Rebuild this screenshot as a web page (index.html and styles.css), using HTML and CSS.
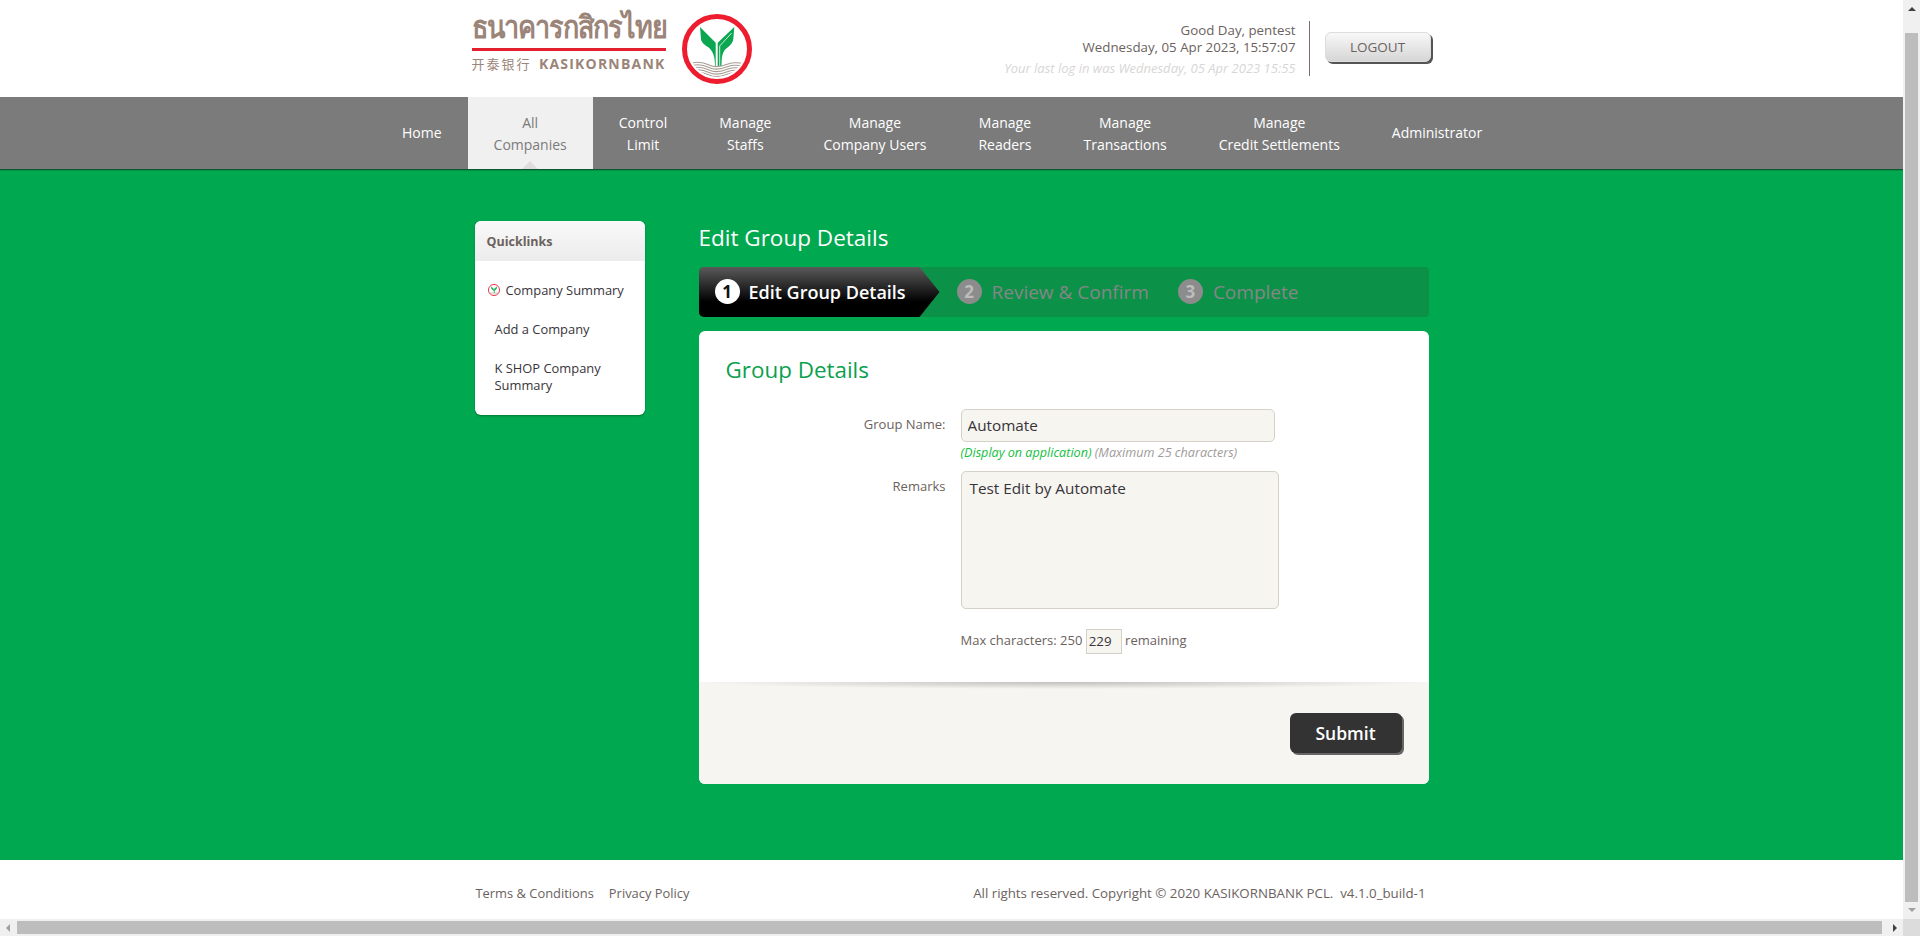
FILE: index.html
```html
<!DOCTYPE html>
<html>
<head>
  <title>Edit Group Details</title>
  <link rel="stylesheet" href="styles.css">
</head>
<body>
  <svg class="defs" width="0" height="0">
    <symbol id="emblem" viewBox="0 0 70 70">
      <clipPath id="ringClip"><circle cx="35" cy="35" r="28"/></clipPath>
      <circle cx="35" cy="35" r="32.500" fill="#fff" stroke="#ed1c2e" stroke-width="5"/>
      <path d="M18 13L33.700 28.700V52H33C33 42 31 37 26 33C21 30 19 27 19 25Z" fill="#0aa650"/>
      <path d="M52.300 13L35.700 28.700V52H39.500C39.500 44 40 37 45 34C49 31 51 28 51.300 25Z" fill="#0aa650"/>
      <path d="M37.700 52V32L49.700 19" fill="none" stroke="#fff" stroke-width="0.800"/>
      <g clip-path="url(#ringClip)" fill="none" stroke="#a89c92" stroke-width="1.100">
        <path d="M7 50C15 47 21 48 27 51S41 52 46 50 55 48 63 50"/>
        <path d="M7 52.500C15 49.500 21 50.500 27 53.500S41 54.500 46 52.500 55 50.500 63 52.500"/>
        <path d="M7 55C15 52 21 53 27 56S41 57 46 55 55 53 63 55"/>
        <path d="M7 57.500C15 54.500 21 55.500 27 58.500S41 59.500 46 57.500 55 55.500 63 57.500"/>
        <path d="M7 60C15 57 21 58 27 61S41 62 46 60 55 58 63 60"/>
      </g>
    </symbol>
  </svg>

  <div class="shell">
    <div class="page">
      <header class="topbar">
        <div class="wrap topbar-inner">
          <div class="logo">
            <div class="logo-thai"><span>ธนาคารกสิกรไทย</span></div>
            <div class="logo-sub"><span class="logo-cn">开泰银行</span><span class="logo-en">KASIKORNBANK</span></div>
          </div>
          <svg class="logo-emblem"><use href="#emblem"/></svg>
          <div class="greeting">
            <div>Good Day, pentest</div>
            <div>Wednesday, 05 Apr 2023, 15:57:07</div>
            <div class="last-login">Your last log in was Wednesday, 05 Apr 2023 15:55</div>
          </div>
          <button type="button" class="logout">LOGOUT</button>
        </div>
      </header>

      <nav class="mainnav">
        <a class="single">Home</a>
        <a class="active">All<br>Companies</a>
        <a>Control<br>Limit</a>
        <a>Manage<br>Staffs</a>
        <a>Manage<br>Company Users</a>
        <a>Manage<br>Readers</a>
        <a>Manage<br>Transactions</a>
        <a>Manage<br>Credit Settlements</a>
        <a class="single">Administrator</a>
      </nav>

      <main class="content">
        <div class="wrap columns">
          <aside class="quicklinks">
            <div class="quicklinks-head">Quicklinks</div>
            <ul>
              <li class="current"><svg class="bullet"><use href="#emblem"/></svg>Company Summary</li>
              <li>Add a Company</li>
              <li>K SHOP Company Summary</li>
            </ul>
          </aside>

          <section class="panel">
            <h1>Edit Group Details</h1>
            <div class="steps">
              <div class="step active"><span class="num">1</span>Edit Group Details</div>
              <div class="step second"><span class="num">2</span>Review &amp; Confirm</div>
              <div class="step third"><span class="num">3</span>Complete</div>
            </div>

            <form class="card">
              <div class="card-body">
                <h2>Group Details</h2>
                <div class="form-grid">
                  <label for="groupName">Group Name:</label>
                  <div>
                    <input id="groupName" class="text-input" type="text" value="Automate">
                    <div class="hint"><em class="green">(Display on application)</em> (Maximum 25 characters)</div>
                  </div>
                  <label for="remarks" class="remarks-label">Remarks</label>
                  <div>
                    <textarea id="remarks" class="text-area">Test Edit by Automate</textarea>
                    <div class="counter">Max characters: 250 <input class="count-box" type="text" value="229"> remaining</div>
                  </div>
                </div>
              </div>
              <div class="card-foot">
                <button type="button" class="submit">Submit</button>
              </div>
            </form>
          </section>
        </div>
      </main>

      <footer class="bottombar">
        <div class="wrap bottombar-inner">
          <a>Terms &amp; Conditions</a>
          <a>Privacy Policy</a>
          <span class="copyright">All rights reserved. Copyright © 2020 KASIKORNBANK PCL.&nbsp; v4.1.0_build-1</span>
        </div>
      </footer>
    </div>

    <div class="vbar">
      <span class="arrow up"></span>
      <div class="vthumb"></div>
      <span class="arrow down"></span>
    </div>
    <div class="hbar">
      <span class="arrow left"></span>
      <div class="hthumb"></div>
      <span class="arrow right"></span>
    </div>
    <div class="corner"></div>
  </div>
</body>
</html>
```
FILE: styles.css
```css
* {
  box-sizing: border-box;
}

body {
  margin: 0;
  overflow: hidden;
  font-family: "Open Sans", "Liberation Sans", sans-serif;
  font-size: 13px;
  color: #666;
  background-color: #fff;
}

.defs {
  display: block;
  height: 0;
}

.shell {
  display: grid;
  grid-template-columns: 1fr 17px;
  grid-template-rows: 1fr 17px;
  height: 936px;
}

.page {
  display: flex;
  flex-direction: column;
  overflow: hidden;
}

.wrap {
  width: 960px;
  margin: 0 auto;
}

/* Header */
.topbar {
  height: 97px;
  flex: none;
}

.topbar-inner {
  display: flex;
  align-items: center;
  height: 100%;
}

.logo {
  align-self: flex-start;
  width: 194px;
  padding-top: 6px;
  color: #9b8478;
}

.logo-thai {
  height: 45px;
  border-bottom: 3px solid #e3202f;
  font-family: "Noto Sans", "DejaVu Sans", sans-serif;
  font-size: 27px;
  font-weight: 700;
  letter-spacing: -1px;
  line-height: 46px;
  white-space: nowrap;
}

.logo-thai span {
  display: inline-block;
  transform: scaleY(1.15);
  transform-origin: 0 80%;
}

.logo-sub {
  display: flex;
  justify-content: space-between;
  align-items: center;
  height: 18px;
  margin-top: 3px;
  white-space: nowrap;
}

.logo-cn {
  font-family: "Noto Sans CJK SC", sans-serif;
  font-size: 13px;
  letter-spacing: 2px;
}

.logo-en {
  font-size: 14px;
  font-weight: 700;
  letter-spacing: 1.2px;
}

.logo-emblem {
  width: 70px;
  height: 70px;
  margin-left: 16px;
}

.greeting {
  margin-left: auto;
  padding: 1px 13px 0 0;
  height: 55px;
  width: 500px;
  border-right: 1px solid #7a6e6a;
  text-align: right;
  font-size: 13.300px;
  line-height: 17px;
  color: #6b625e;
}

.last-login {
  margin-top: 4px;
  font-size: 13px;
  font-style: italic;
  color: #d8d6d6;
}

.logout {
  width: 106px;
  height: 30px;
  margin: -3px 1px 0 15px;
  border: 1px solid #ddd;
  border-radius: 6px;
  background-image: linear-gradient(to bottom, #f8f8f8, #d6d6d6);
  box-shadow: 2px 2px 0 #555;
  font-family: inherit;
  font-size: 13.500px;
  color: #6b625e;
}

/* Main navigation */
.mainnav {
  display: flex;
  flex: none;
  height: 72px;
  padding-left: 376px;
  background-color: #7b7b7b;
}

.mainnav a {
  display: flex;
  align-items: center;
  position: relative;
  padding: 1px 26px 0;
  text-align: center;
  font-size: 14px;
  line-height: 22px;
  color: #fff;
}

.mainnav a.single {
  padding-top: 0;
}

.mainnav a.active {
  background-color: #f0f0f0;
  color: #7b7b7b;
}

.mainnav a.active::after {
  content: "";
  position: absolute;
  left: 50%;
  bottom: 0;
  margin-left: -8px;
  border: 8px solid transparent;
  border-top-width: 0;
  border-bottom-color: #e0dcdc;
}

/* Content */
.content {
  flex: none;
  height: 691px;
  padding-top: 51px;
  background-color: #00a84f;
  border-top: 1px solid #0a5a30;
  box-shadow: inset 0 1px 0 #088f45;
}

.columns {
  display: flex;
  gap: 54px;
  padding: 0 3px;
}

.quicklinks {
  width: 170px;
  height: 194px;
  border-radius: 6px;
  background-color: #fff;
  box-shadow: 0 1px 2px rgba(0, 0, 0, 0.3);
}

.quicklinks-head {
  height: 40px;
  padding-left: 12px;
  border-radius: 6px 6px 0 0;
  background-image: linear-gradient(to bottom, #f9f9f9, #ececec);
  font-weight: 700;
  font-size: 12.500px;
  line-height: 42px;
  color: #6b625e;
}

.quicklinks ul {
  margin: 0;
  padding: 21px 10px 0 20px;
  list-style: none;
}

.quicklinks li {
  margin-bottom: 22px;
  font-size: 12.900px;
  line-height: 17px;
  color: #38343a;
}

.quicklinks li.current {
  display: flex;
  align-items: center;
  gap: 6px;
  margin-left: -7px;
}

.bullet {
  width: 12px;
  height: 12px;
  margin-top: -1px;
  flex: none;
}

.panel {
  width: 730px;
}

h1 {
  height: 46px;
  margin: 0;
  font-size: 22.500px;
  font-weight: 500;
  line-height: 34px;
  color: #fff;
}

.steps {
  display: flex;
  height: 50px;
  border-radius: 4px;
  background-color: #0c9148;
}

.step {
  display: flex;
  align-items: center;
  padding-bottom: 1px;
  font-size: 19px;
  font-weight: 400;
  color: #868686;
  white-space: nowrap;
}

.step.active {
  width: 241px;
  padding-left: 16px;
  border-radius: 5px 0 0 5px;
  clip-path: polygon(0 0, 221px 0, 100% 50%, 221px 100%, 0 100%);
  background-image: linear-gradient(to bottom, #5a5a5a, #000 70%);
  font-size: 18px;
  font-weight: 600;
  color: #fff;
}

.step.second {
  margin-left: 17px;
}

.step.third {
  margin-left: 29px;
}

.num {
  display: flex;
  align-items: center;
  justify-content: center;
  width: 25px;
  height: 25px;
  margin-right: 10px;
  border-radius: 50%;
  background-color: #8c8c8c;
  font-size: 17px;
  font-weight: 700;
  color: #bdbdbd;
}

.step.active .num {
  margin-right: 9px;
  background-color: #fff;
  color: #111;
}

.card {
  margin-top: 14px;
  border-radius: 6px;
  background-color: #fff;
  overflow: hidden;
}

.card-body {
  padding: 24px 27px 28px;
  height: 351px;
}

h2 {
  margin: 0 0 25px;
  font-size: 22.400px;
  font-weight: 400;
  line-height: 29px;
  color: #0b9f4e;
}

.form-grid {
  display: grid;
  grid-template-columns: 220px 1fr;
  column-gap: 15px;
}

.form-grid label {
  padding-top: 7px;
  text-align: right;
  font-size: 13px;
  line-height: 17px;
  color: #6b625e;
}

.form-grid .remarks-label {
  padding-top: 7px;
}

.text-input {
  display: block;
  width: 314px;
  height: 33px;
  padding: 0 6px 2px;
  border: 1px solid #d5d0c8;
  border-radius: 5px;
  background-color: #f6f5f0;
  font-family: inherit;
  font-size: 15.300px;
  color: #38343a;
}

.hint {
  height: 29px;
  font-size: 12.600px;
  font-style: italic;
  line-height: 22px;
  color: #a09a9a;
}

.green {
  color: #12c040;
}

.text-area {
  display: block;
  width: 318px;
  height: 138px;
  padding: 7px 8px;
  border: 1px solid #d5d0c8;
  border-radius: 5px;
  background-color: #f6f5f0;
  font-family: inherit;
  font-size: 15.300px;
  line-height: 19px;
  color: #38343a;
  resize: none;
}

.counter {
  margin-top: 19px;
  font-size: 13px;
  line-height: 25px;
  color: #6b625e;
}

.count-box {
  width: 36px;
  height: 25px;
  padding: 0 2px;
  border: 1px solid #d5d0c8;
  background-color: #f6f5f0;
  font-family: inherit;
  font-size: 13.300px;
  color: #38343a;
  vertical-align: -1px;
}

.card-foot {
  display: flex;
  justify-content: flex-end;
  height: 102px;
  padding: 31px 27px 0 0;
  background-color: #f6f5f1;
  background-image: radial-gradient(ellipse 50% 7px at 50% 0, rgba(0, 0, 0, 0.22), transparent);
}

.submit {
  width: 112px;
  height: 40px;
  border: none;
  border-radius: 6px;
  background-color: #333;
  box-shadow: 2px 2px 0 #666;
  font-family: inherit;
  font-size: 17.500px;
  font-weight: 600;
  color: #fff;
}

/* Footer */
.bottombar {
  flex: 1;
}

.bottombar-inner {
  display: flex;
  gap: 15px;
  padding: 24px 6px 0 4px;
  font-size: 12.900px;
  line-height: 18px;
  color: #6b625e;
}

.copyright {
  margin-left: auto;
  font-size: 13.300px;
}

/* Browser scrollbars */
.vbar {
  display: flex;
  flex-direction: column;
  align-items: center;
  grid-row: 1;
  grid-column: 2;
  background-color: #f0f0f0;
}

.vthumb {
  width: 13px;
  flex: 1;
  margin: 22px 0 6px;
  background-color: #bdbdbd;
}

.hbar {
  display: flex;
  align-items: center;
  grid-row: 2;
  grid-column: 1;
  background-color: #f0f0f0;
}

.hthumb {
  height: 13px;
  flex: 1;
  margin: 0 11px 0 7px;
  background-color: #bdbdbd;
}

.corner {
  background-color: #dcdcdc;
}

.arrow {
  flex: none;
  width: 0;
  height: 0;
  border: 4px solid transparent;
}

.arrow.up {
  margin-top: 7px;
  border-top-width: 0;
  border-bottom-color: #404040;
}

.arrow.down {
  margin-bottom: 7px;
  border-bottom-width: 0;
  border-top-color: #a0a0a0;
}

.arrow.left {
  margin-left: 6px;
  border-left-width: 0;
  border-right-color: #a0a0a0;
}

.arrow.right {
  margin-right: 6px;
  border-right-width: 0;
  border-left-color: #404040;
}
```
